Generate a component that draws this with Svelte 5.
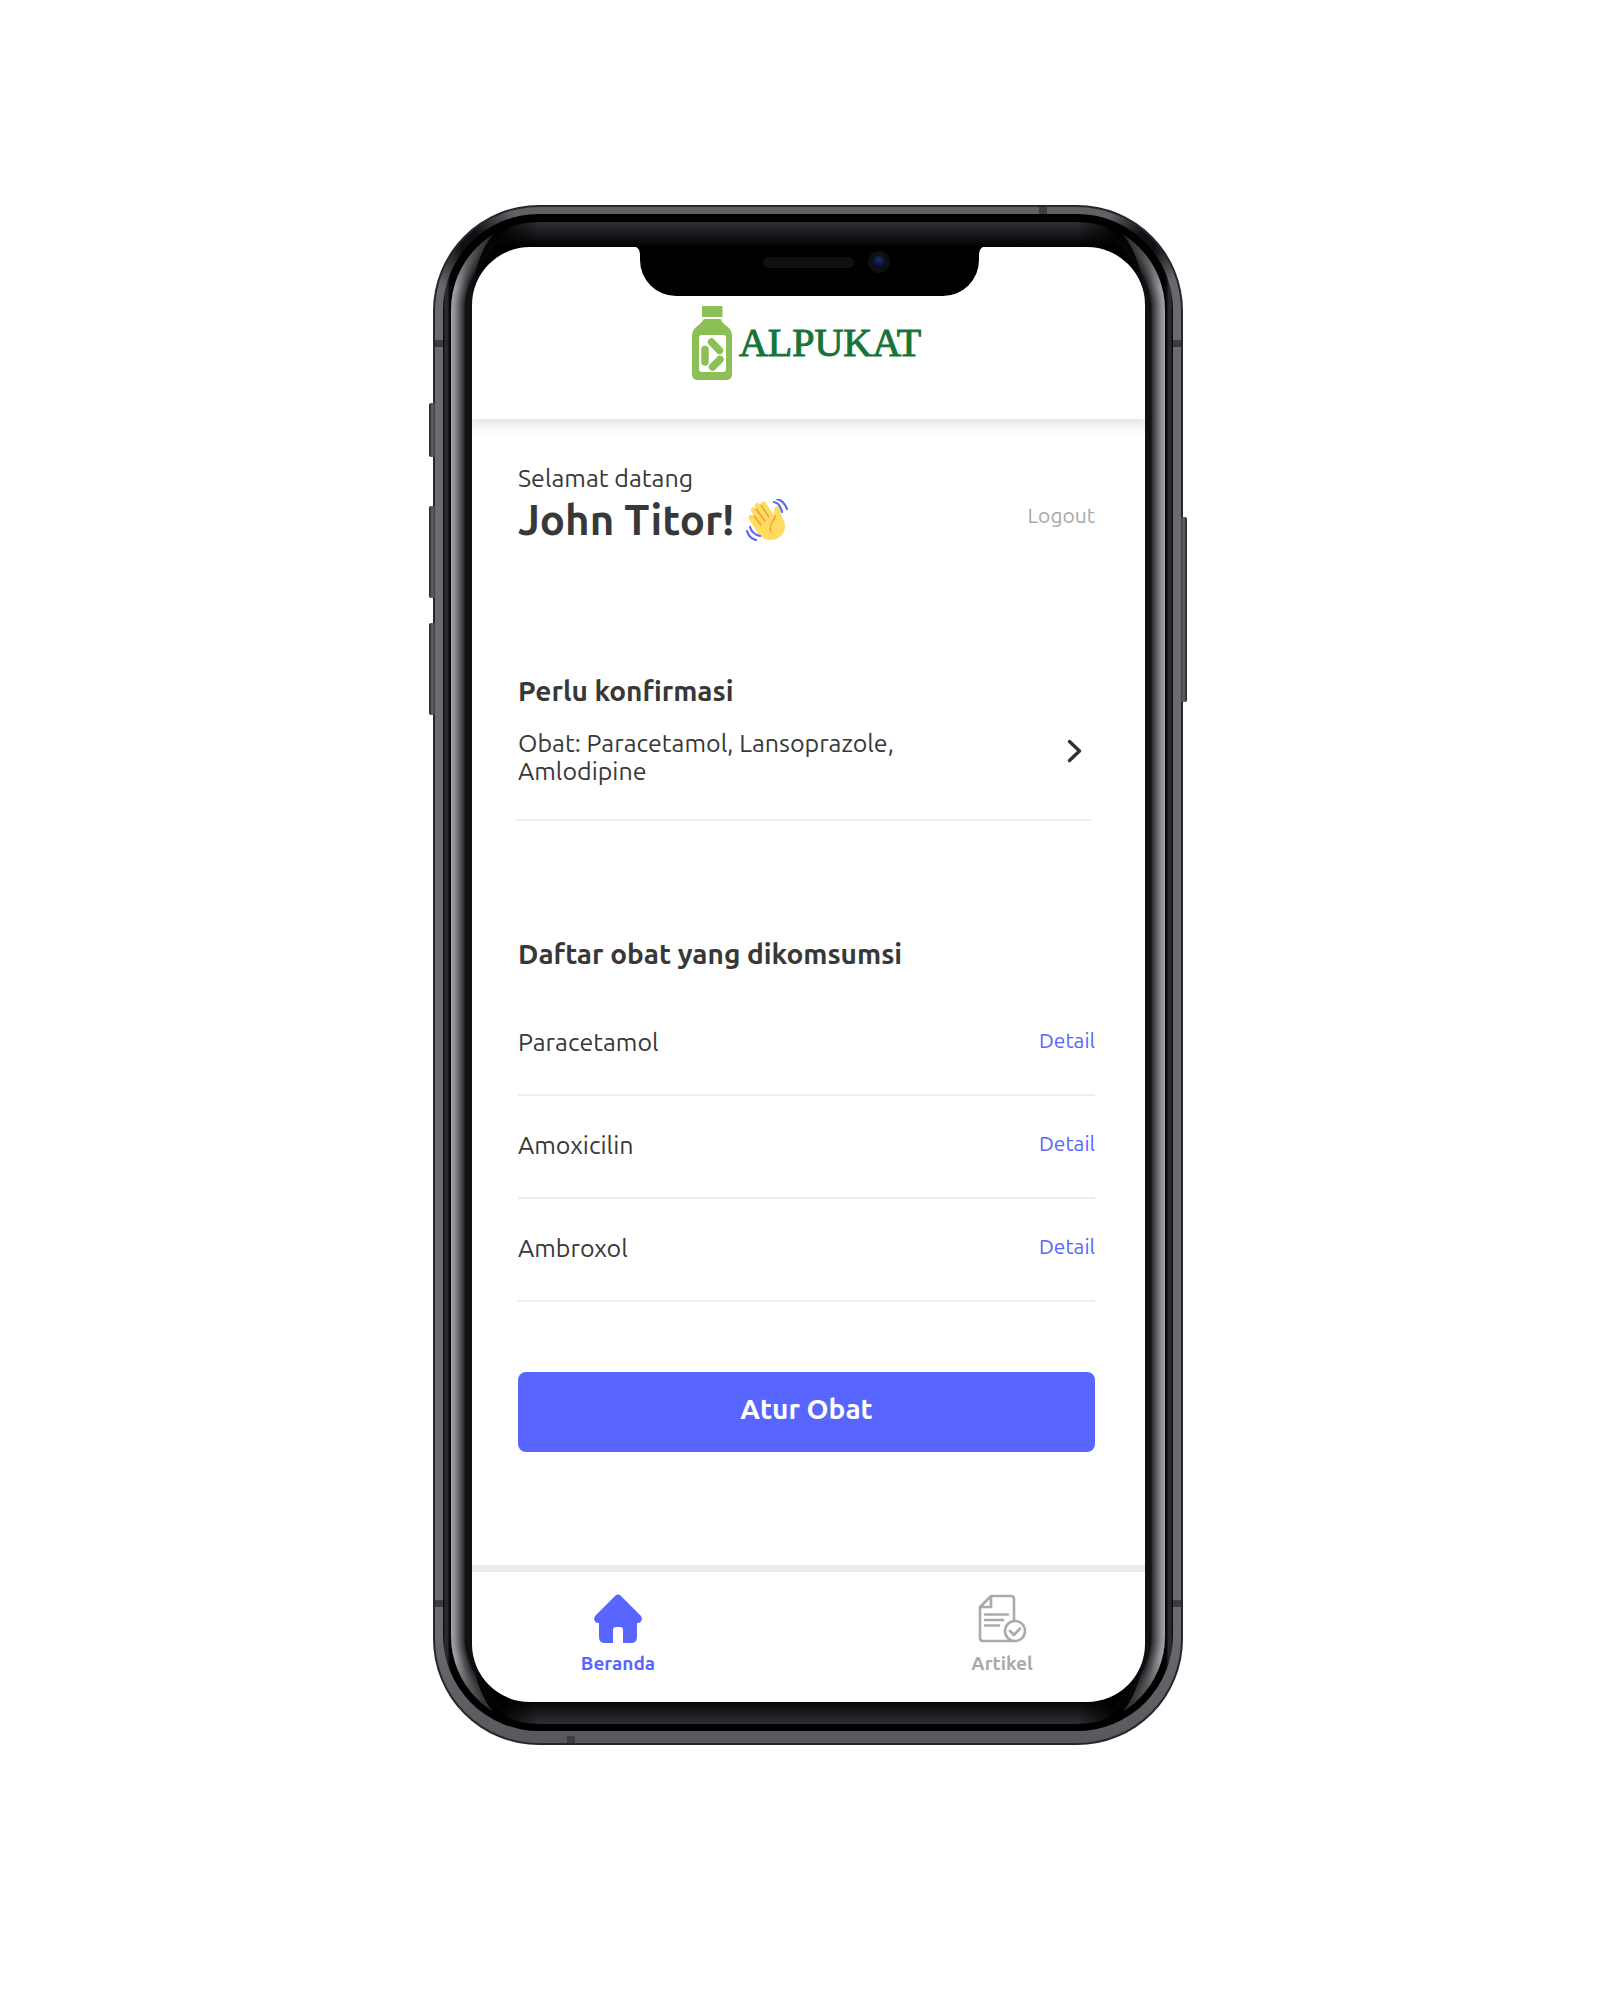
<script>
  const medicines = ['Paracetamol', 'Amoxicilin', 'Ambroxol'];
  const corners = ['top left', 'top right', 'bottom left', 'bottom right'];
</script>

<main class="page">
  <div class="phone">
    <span class="key mute"></span>
    <span class="key volume-up"></span>
    <span class="key volume-down"></span>
    <span class="key power"></span>
    <div class="metal">
      <span class="seam seam-top"></span>
      <span class="seam seam-bottom"></span>
      <span class="seam seam-left"></span>
      <span class="seam seam-left low"></span>
      <span class="seam seam-right"></span>
      <span class="seam seam-right low"></span>
      <div class="band">
        <div class="bezel">
          <svg class="paints" width="0" height="0" aria-hidden="true">
            <defs>
              <radialGradient id="ring" cx="88" cy="88" r="88" gradientUnits="userSpaceOnUse">
                <stop offset="0.76" stop-color="#101113" />
                <stop offset="0.84" stop-color="#101113" />
                <stop offset="0.852" stop-color="#2b2c30" />
                <stop offset="0.955" stop-color="#8b8c90" />
                <stop offset="1" stop-color="#a6a7ab" />
              </radialGradient>
              <linearGradient id="dusk" x1="0" y1="8" x2="0" y2="66" gradientUnits="userSpaceOnUse">
                <stop offset="0" stop-color="#000" stop-opacity="0.85" />
                <stop offset="1" stop-color="#000" stop-opacity="0" />
              </linearGradient>
              <linearGradient id="sheen" x1="0" y1="0" x2="0" y2="25" gradientUnits="userSpaceOnUse">
                <stop offset="0" stop-color="#2e3035" />
                <stop offset="1" stop-color="#000" />
              </linearGradient>
              <linearGradient id="fade" x1="44" y1="0" x2="88" y2="0" gradientUnits="userSpaceOnUse">
                <stop offset="0" stop-color="#000" />
                <stop offset="1" stop-color="#000" stop-opacity="0" />
              </linearGradient>
            </defs>
          </svg>
          {#each corners as corner}
            <svg class="corner {corner}" viewBox="0 0 88 88" aria-hidden="true">
              <path d="M0 0H88V88H0Z" fill="#000" />
              <path d="M40 25Q52 0 88 0V25Z" fill="url(#sheen)" />
              <path d="M40 0H88V25H40Z" fill="url(#fade)" />
              <path d="M21 88C21 62 30 42 48 20L40 10L0 40V88Z" fill="#090a0b" />
              <path d="M0 88V40L43 11C26 32 21 58 21 88Z" fill="url(#ring)" />
              <path d="M0 0H46V88H0Z" fill="url(#dusk)" />
            </svg>
          {/each}
          <div class="screen">
            <div class="notch">
              <svg class="fillet before" viewBox="0 0 9 9" aria-hidden="true"><path d="M0 0H9V9Q9 0 0 0Z" /></svg>
              <span class="speaker"></span>
              <span class="camera"></span>
              <svg class="fillet after" viewBox="0 0 9 9" aria-hidden="true"><path d="M9 0H0V9Q0 0 9 0Z" /></svg>
            </div>

            <header class="header">
              <svg class="bottle" viewBox="0 0 40 75" aria-hidden="true">
                <path fill="#8cc057" d="M10 0H30.500V11H10ZM12 13H28.500L31 17L37 22Q40 25 40 29V68Q40 74 34 74H6Q0 74 0 68V29Q0 25 3 22L9 17Z" />
                <rect x="7" y="29" width="27" height="37" rx="3" fill="#fff" />
                <g stroke="#8cc057" stroke-width="7.500" stroke-linecap="round">
                  <path d="M13 43.500V56" />
                  <path d="M19.500 36L27.500 44.500" />
                  <path d="M28 53.500L20.500 61" />
                </g>
              </svg>
              <span class="brand">ALPUKAT</span>
            </header>

            <div class="content">
              <section class="greeting">
                <div>
                  <p class="text">Selamat datang</p>
                  <h1>
                    John Titor!
                    <svg class="wave" viewBox="0 0 42 42" aria-hidden="true">
                      <path fill="#ffdc5d" d="M3 20C1 17 5 14 7.500 17L8.500 18L5 12C3.500 9 7.500 7 9.500 9.500L10.500 10.500L9 7.500C8 4 12 3 14 5.500L15 7C14 3 17.500 1 20 4L28 16.500L28.500 10C29 6 34 6 34 10C34 17 39 21 39 27C39 35 33 41 24 41C17 41 13 36 10 31Z" />
                      <path fill="none" stroke="#ef9645" stroke-width="1.300" stroke-linecap="round" d="M8 17L15 26M10 10L19 22M15 6L23 18M29 17C30 22 22 22 25 33" />
                      <g fill="none" stroke="#5865ff" stroke-width="2.200" stroke-linecap="round">
                        <path d="M28 3Q34 4 36 13M31 0Q38 2 41 10" />
                        <path d="M4 28Q6 35 14 37M1 32Q3 39 10 41" />
                      </g>
                    </svg>
                  </h1>
                </div>
                <button class="logout" type="button">Logout</button>
              </section>

              <section class="confirm">
                <h2>Perlu konfirmasi</h2>
                <a class="pending" href="#konfirmasi">
                  <span class="text">Obat: Paracetamol, Lansoprazole, Amlodipine</span>
                  <svg class="chevron" viewBox="0 0 16 24" aria-hidden="true">
                    <path d="M2.500 2.500L12.500 12L2.500 21.500" fill="none" stroke="#333" stroke-width="3.500" stroke-linecap="round" stroke-linejoin="round" />
                  </svg>
                </a>
              </section>

              <section class="medicines">
                <h2>Daftar obat yang dikomsumsi</h2>
                <ul>
                  {#each medicines as name}
                    <li>
                      <span class="text">{name}</span>
                      <a class="detail" href="#{name.toLowerCase()}">Detail</a>
                    </li>
                  {/each}
                </ul>
              </section>

              <button class="primary" type="button">Atur Obat</button>
            </div>

            <nav class="tabs">
              <a class="tab active" href="#beranda">
                <svg viewBox="0 0 48 49" aria-hidden="true">
                  <path fill="currentColor" d="M21.500 1.500Q24 -0.500 26.500 1.500L46.500 21.500Q49 24.500 47 27.500Q46 29 43 29V43Q43 49 37 49H29V36Q29 33 26 33H22Q19 33 19 36V49H11Q5 49 5 43V29Q2 29 1 27.500Q-1 24.500 1.500 21.500Z" />
                </svg>
                Beranda
              </a>
              <a class="tab" href="#artikel">
                <svg viewBox="0 0 48 49" aria-hidden="true">
                  <g fill="none" stroke="currentColor" stroke-width="2.600" stroke-linecap="round" stroke-linejoin="round">
                    <path d="M36 26V5Q36 2 33 2H13L2 13V44Q2 47 5 47H37M13 2V13H2" />
                    <path d="M7 20.500H30M7 26H25M7 31.500H21" />
                    <circle cx="37" cy="37" r="10" fill="#fff" />
                    <path d="M32 37L36 41L42 34.500" />
                  </g>
                </svg>
                Artikel
              </a>
            </nav>
          </div>
        </div>
      </div>
    </div>
  </div>
</main>

<style>
  :global(body) {
    background: #fff;
  }

  .page {
    box-sizing: border-box;
    display: flex;
    justify-content: center;
    padding: 205px 24px 205px 40px;
    color: #383838;
    font-family: Ubuntu, 'Noto Sans', sans-serif;
  }

  h1,
  h2,
  p,
  ul {
    margin: 0;
    padding: 0;
  }

  a {
    color: inherit;
    text-decoration: none;
  }

  button {
    border: 0;
    font-family: inherit;
    cursor: pointer;
  }

  /* Device */
  .phone {
    position: relative;
    box-sizing: border-box;
    width: 100%;
    max-width: 750px;
    padding: 2px;
    border-radius: 106px;
    background: #25272b;
  }

  .metal {
    position: relative;
    padding: 7px 8px 12px;
    border-radius: 104px;
    background:
      radial-gradient(circle at 38px 38px, #101114 12px, transparent 50px),
      radial-gradient(circle at calc(100% - 38px) 38px, #101114 12px, transparent 44px),
      linear-gradient(#5f6164, #6b6c70 120px, #6b6c70 calc(100% - 120px), #58595c);
  }

  .band {
    padding: 8px 8px 7px;
    border-radius: 96px;
    background:
      linear-gradient(90deg, #0b0c0e 1px, #2c2e33 2px, #24262a 5px, #0a0b0d 6px, transparent 9px) left / 50% 100% no-repeat,
      linear-gradient(270deg, #0b0c0e 1px, #2c2e33 2px, #24262a 5px, #0a0b0d 6px, transparent 9px) right / 50% 100% no-repeat,
      #000;
  }

  .bezel {
    position: relative;
    overflow: hidden;
    padding: 25px 20px 22px 21px;
    border-radius: 88px;
    background:
      linear-gradient(90deg, #a6a7ab, #8b8c90 4px, #2b2c30 13px, #101113 14px, #101113 21px) left / 21px 100% no-repeat,
      linear-gradient(270deg, #a6a7ab, #8b8c90 4px, #2b2c30 13px, #101113 14px, #101113 21px) right / 21px 100% no-repeat,
      linear-gradient(#2e3035, #000) top / 100% 25px no-repeat,
      linear-gradient(#000, #2e3035) bottom / 100% 25px no-repeat,
      #000;
  }

  .paints {
    position: absolute;
  }

  .corner {
    position: absolute;
    width: 88px;
    height: 88px;
  }

  .corner.top {
    top: 0;
  }

  .corner.bottom {
    bottom: 0;
  }

  .corner.left {
    left: 0;
  }

  .corner.right {
    right: 0;
  }

  .corner.top.right {
    transform: scaleX(-1);
  }

  .corner.bottom.left {
    transform: scaleY(-1);
  }

  .corner.bottom.right {
    transform: scale(-1);
  }

  .key {
    position: absolute;
    left: -4px;
    width: 6px;
    border-radius: 2px 0 0 2px;
    background: linear-gradient(90deg, #2c2e31 1px, #66676b 3px, #3a3b3e);
  }

  .mute {
    top: 198px;
    height: 54px;
  }

  .volume-up {
    top: 301px;
    height: 92px;
  }

  .volume-down {
    top: 418px;
    height: 92px;
  }

  .power {
    top: 312px;
    right: -4px;
    left: auto;
    height: 185px;
    border-radius: 0 2px 2px 0;
    background: linear-gradient(270deg, #2c2e31 1px, #66676b 3px, #3a3b3e);
  }

  .seam {
    position: absolute;
    width: 8px;
    height: 7px;
    background: #3c3d40;
  }

  .seam-top {
    top: 0;
    right: 134px;
  }

  .seam-bottom {
    bottom: 0;
    left: 132px;
  }

  .seam-left {
    top: 133px;
    left: 0;
  }

  .seam-right {
    top: 133px;
    right: 0;
  }

  .seam.low {
    top: auto;
    bottom: 136px;
  }

  /* Screen */
  .screen {
    position: relative;
    overflow: hidden;
    border-radius: 58px;
    background: #fff;
  }

  .notch {
    position: absolute;
    top: -1px;
    left: 50%;
    z-index: 1;
    display: flex;
    align-items: center;
    gap: 14px;
    box-sizing: border-box;
    width: 339px;
    height: 50px;
    margin-left: -169px;
    padding: 0 88px 18px 123px;
    border-radius: 0 0 36px 36px;
    background: #000;
  }

  .fillet {
    position: absolute;
    top: 0;
    width: 9px;
    height: 9px;
  }

  .fillet.before {
    left: -9px;
  }

  .fillet.after {
    right: -9px;
  }

  .speaker {
    width: 91px;
    height: 11px;
    border-radius: 6px;
    background: #0f1012;
  }

  .camera {
    box-sizing: border-box;
    width: 22px;
    height: 22px;
    border: 5px solid #0d0f13;
    border-radius: 50%;
    background: radial-gradient(circle at 50% 30%, #14306a, #06102c 70%);
  }

  .header {
    display: flex;
    align-items: flex-start;
    justify-content: center;
    gap: 7px;
    box-sizing: border-box;
    min-height: 172px;
    padding: 59px 24px 24px 20px;
    box-shadow: 0 0 14px 4px rgb(0 0 0 / 14%);
  }

  .bottle {
    width: 40px;
    height: 75px;
  }

  .brand {
    color: #15743a;
    font: 40px/74px 'Liberation Serif', serif;
    -webkit-text-stroke: 1px #15743a;
  }

  .content {
    padding: 45px 50px 113px 46px;
  }

  .text {
    font-size: 25px;
    line-height: 28px;
  }

  .greeting {
    display: flex;
    align-items: center;
    justify-content: space-between;
  }

  h1 {
    display: flex;
    align-items: center;
    gap: 12px;
    font-size: 42px;
    line-height: 56px;
  }

  .wave {
    width: 42px;
    height: 42px;
  }

  .logout {
    padding: 18px 0 0;
    background: none;
    color: #aaa;
    font-size: 21px;
    line-height: 24px;
  }

  .confirm {
    margin-top: 123px;
  }

  h2 {
    font-size: 28px;
    line-height: 40px;
  }

  .pending {
    display: flex;
    align-items: center;
    justify-content: space-between;
    gap: 24px;
    margin: 18px 4px 0 -3px;
    padding: 0 8px 34px 3px;
    border-bottom: 2px solid #f0f0f0;
  }

  .pending .text {
    max-width: 400px;
  }

  .chevron {
    width: 16px;
    height: 24px;
    margin-bottom: 12px;
  }

  .medicines {
    margin-top: 113px;
  }

  ul {
    margin-top: 19px;
    list-style: none;
  }

  li {
    display: flex;
    align-items: center;
    justify-content: space-between;
    box-sizing: border-box;
    min-height: 103px;
    padding-bottom: 4px;
    border-bottom: 2px solid #eee;
  }

  .detail {
    padding-bottom: 4px;
    color: #5865ff;
    font-size: 21px;
    line-height: 24px;
  }

  .primary {
    width: 100%;
    margin-top: 70px;
    padding: 17px 16px 23px;
    border-radius: 8px;
    background: #5865ff;
    color: #fff;
    font-size: 28px;
    font-weight: 700;
    line-height: 40px;
  }

  .tabs {
    display: flex;
    justify-content: space-between;
    padding: 22px 103px 27px 106px;
    border-top: 7px solid #ececec;
  }

  .tab {
    display: flex;
    flex-direction: column;
    align-items: center;
    gap: 8px;
    min-width: 80px;
    color: #aaa;
    font-size: 19px;
    font-weight: 600;
    line-height: 24px;
  }

  .tab svg {
    width: 48px;
    height: 49px;
  }

  .tab.active {
    color: #5865ff;
  }
</style>
